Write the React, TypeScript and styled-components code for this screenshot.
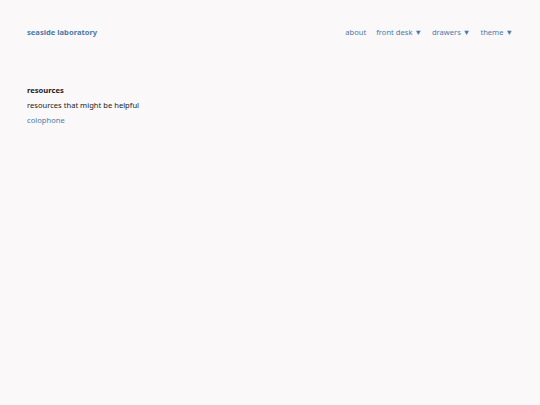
import React from "react"
import styled, { createGlobalStyle } from "styled-components"

const GlobalStyle = createGlobalStyle`
	html, body {
		margin: 0;
		padding: 0;
		background: #faf8f9;
	}
	body {
		font-family: "Noto Sans", "Open Sans", sans-serif;
		font-size: 7.6px;
		line-height: 15px;
		color: #222;
		min-height: 405px;
	}
`

const Page = styled.div`
	padding: 0 27px;
`

const Header = styled.header`
	display: flex;
	align-items: center;
	justify-content: space-between;
	height: 64px;
`

const Brand = styled.a`
	font-weight: 700;
	color: #4a7aa8;
	text-decoration: none;
`

const Nav = styled.nav`
	display: flex;
	gap: 10px;
`

const NavLink = styled.a`
	color: #4a7aa8;
	text-decoration: none;
`

const Main = styled.main`
	padding-top: 19px;
	display: flex;
	flex-direction: column;
`

const Title = styled.div`
	font-weight: 700;
`

const Link = styled.a`
	color: #4a7aa8;
	text-decoration: none;
`

const navItems = [
	{ label: "about", menu: false },
	{ label: "front desk", menu: true },
	{ label: "drawers", menu: true },
	{ label: "theme", menu: true },
]

export default function App() {
	return (
		<>
			<GlobalStyle />
			<Page>
				<Header>
					<Brand href="#">seaside laboratory</Brand>
					<Nav>
						{navItems.map((item) => (
							<NavLink href="#" key={item.label}>
								{item.label}
								{item.menu && " ▼"}
							</NavLink>
						))}
					</Nav>
				</Header>
				<Main>
					<Title>resources</Title>
					<div>resources that might be helpful</div>
					<Link href="#">colophone</Link>
				</Main>
			</Page>
		</>
	)
}
